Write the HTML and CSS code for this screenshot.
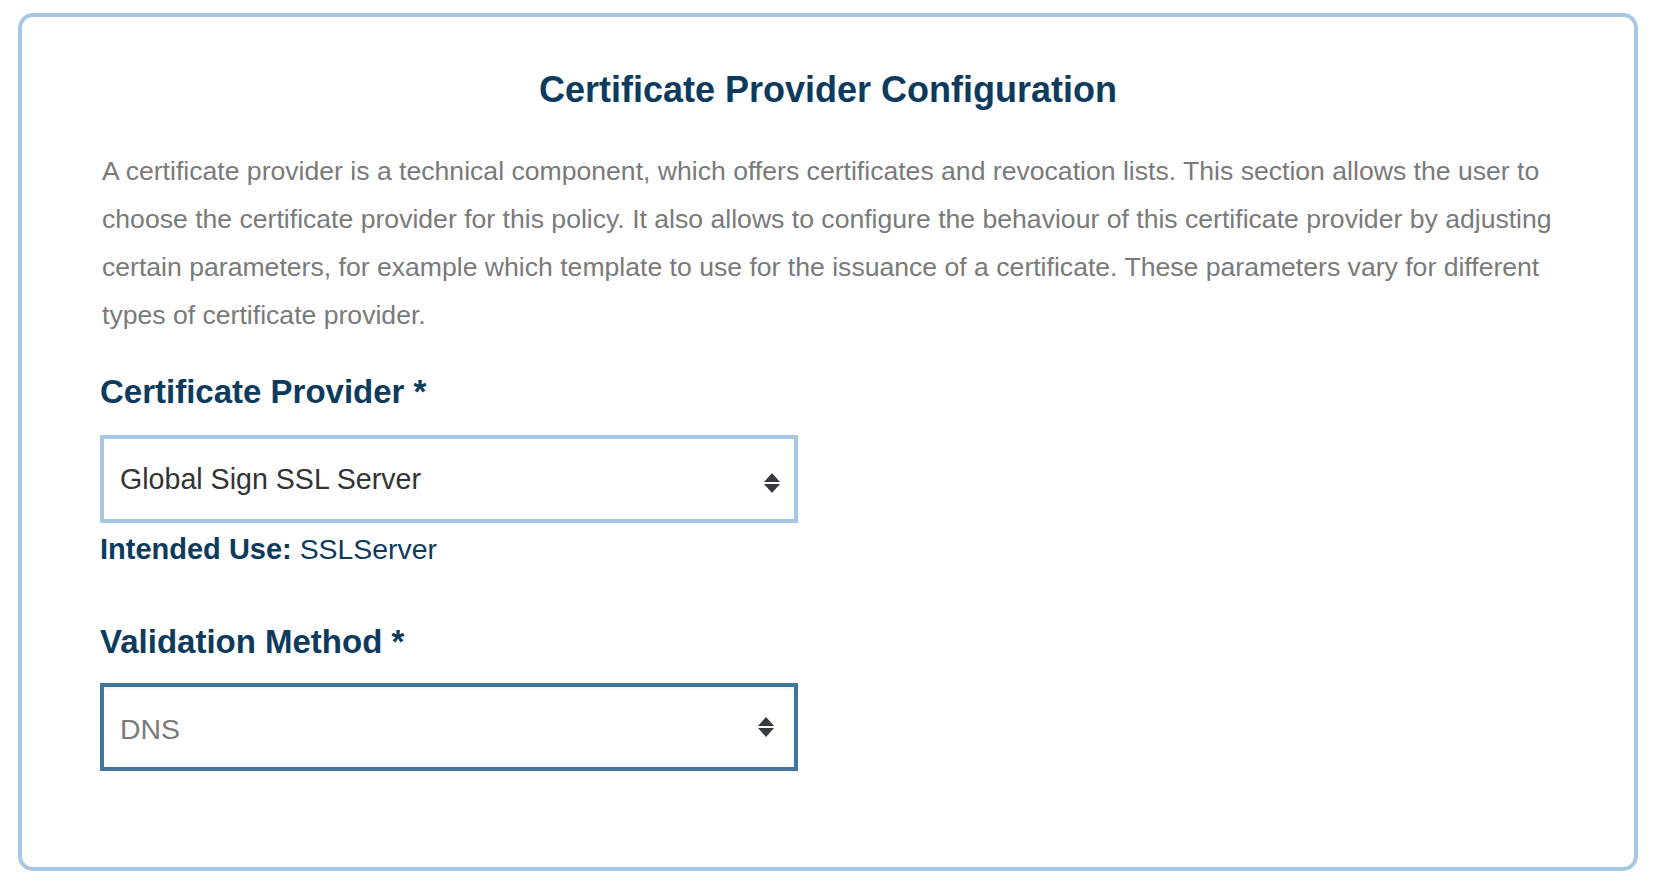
FILE: index.html
```html
<!DOCTYPE html>
<html lang="en">
<head>
<meta charset="utf-8">
<title>Certificate Provider Configuration</title>
<link rel="stylesheet" href="styles.css">
</head>
<body>
<div class="page">
  <section class="card">
    <h1 class="title">Certificate Provider Configuration</h1>
    <p class="intro">A certificate provider is a technical component, which offers certificates and revocation lists. This section allows the user to choose the certificate provider for this policy. It also allows to configure the behaviour of this certificate provider by adjusting certain parameters, for example which template to use for the issuance of a certificate. These parameters vary for different types of certificate provider.</p>

    <div class="field">
      <label class="field-label">Certificate Provider *</label>
      <div class="select">
        <span class="select-value">Global Sign SSL Server</span>
        <svg class="select-arrows" width="16" height="20" viewBox="0 0 16 20" aria-hidden="true">
          <path d="M8 0 L16 9 L0 9 Z" fill="#343a40"/>
          <path d="M0 11 L16 11 L8 20 Z" fill="#343a40"/>
        </svg>
      </div>
      <div class="hint"><strong>Intended Use:</strong> SSLServer</div>
    </div>

    <div class="field field-second">
      <label class="field-label">Validation Method *</label>
      <div class="select select-focus">
        <span class="select-value select-placeholder">DNS</span>
        <svg class="select-arrows" width="16" height="20" viewBox="0 0 16 20" aria-hidden="true">
          <path d="M8 0 L16 9 L0 9 Z" fill="#343a40"/>
          <path d="M0 11 L16 11 L8 20 Z" fill="#343a40"/>
        </svg>
      </div>
    </div>
  </section>
</div>
</body>
</html>
```
FILE: styles.css
```css
html, body {
  margin: 0;
  padding: 0;
  background: #ffffff;
}

body {
  font-family: "Liberation Sans", Arial, sans-serif;
}

.page {
  padding: 13px 16px 0 18px;
}

.card {
  box-sizing: border-box;
  width: 1620px;
  height: 858px;
  border: 4px solid #a8c7e2;
  border-radius: 15px;
  padding: 51px 70px 0 78px;
}

.title {
  margin: 0 8px 0 0;
  text-align: center;
  font-size: 36px;
  line-height: 44px;
  font-weight: 700;
  color: #0c3b5e;
}

.intro {
  margin: 35px 0 0 2px;
  font-size: 26.6px;
  line-height: 48px;
  color: #7a7a7a;
}

.field {
  margin-top: 33px;
}

.field-second {
  margin-top: 55px;
}

.field-label {
  display: block;
  font-size: 33px;
  line-height: 40px;
  font-weight: 700;
  color: #0c3b5e;
}

.select {
  box-sizing: border-box;
  width: 698px;
  height: 88px;
  margin-top: 23px;
  border: 4px solid #a8c7e2;
  background: #ffffff;
  display: flex;
  align-items: center;
  justify-content: space-between;
  padding: 0 14px 0 16px;
}

.select-focus {
  margin-top: 21px;
  border-color: #41759b;
  box-shadow: inset 0 2px 3px rgba(0, 0, 0, 0.06);
  padding-right: 20px;
}

.select-value {
  font-size: 28.6px;
  color: #333333;
  line-height: 36px;
}

.select-placeholder {
  font-size: 28.4px;
  color: #7a7a7a;
  margin-top: 3px;
}

.select-arrows {
  display: block;
  flex: none;
  margin-top: 8px;
}

.select-focus .select-arrows {
  margin-top: 0;
}

.hint {
  margin-top: 8px;
  font-size: 28.4px;
  line-height: 36px;
  color: #0c3b5e;
}

.hint strong {
  font-size: 29px;
  font-weight: 700;
}
```
